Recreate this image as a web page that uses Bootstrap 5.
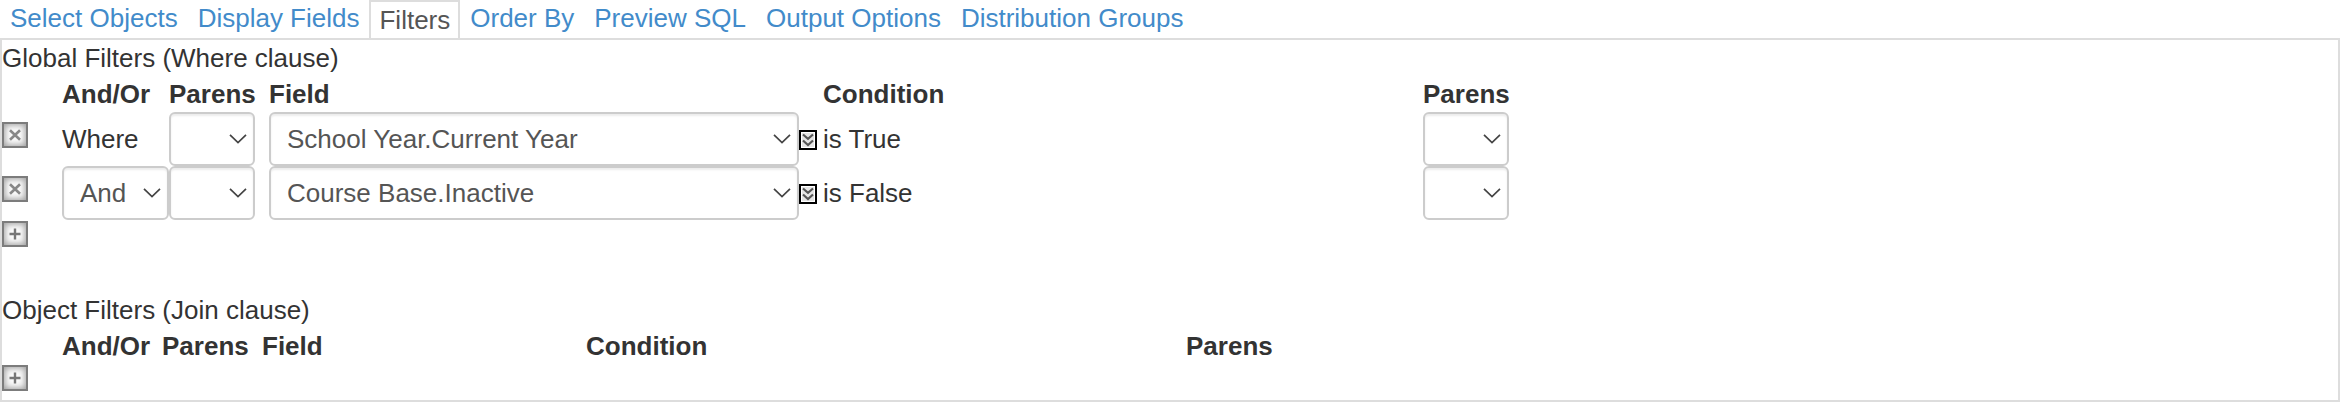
<!DOCTYPE html>
<html lang="en">
<head>
<meta charset="utf-8">
<title>Filters</title>
<link href="https://cdn.jsdelivr.net/npm/bootstrap@5.3.0/dist/css/bootstrap.min.css" rel="stylesheet">
<style>
html{overflow:hidden}
body{font:26px/36px "Liberation Sans",Arial,sans-serif;color:#333;background:#fff;height:402px;overflow:hidden}
.tabs-bar{height:38px}
.tabs-bar .nav-link{padding:0 10px;color:#428bca;line-height:36px;white-space:nowrap}
.tabs-bar .nav-link.active{color:#555;border:2px solid #ddd;border-bottom:0;padding:0 8px;height:38px}
.filter-panel{border:2px solid #ddd;height:364px}
.filter-grid{display:grid;grid-template-columns:60px 107px 100px 554px 600px 86px;white-space:nowrap}
.join-grid{grid-template-columns:60px 100px 100px 324px 600px 86px}
.filter-line{height:54px;line-height:54px}
.add-line{height:36px;padding-top:1px}
.form-select.pick{height:54px;border:2px solid #ccc;border-radius:6px;padding:0 16px;font-size:26px;line-height:50px;color:#555;box-shadow:inset 0 2px 2px rgba(0,0,0,.075);background:#fff url("data:image/svg+xml,%3Csvg xmlns='http://www.w3.org/2000/svg' viewBox='0 0 18 12'%3E%3Cpath d='M1 1.8L9 9.6L17 1.8' fill='none' stroke='%23444' stroke-width='1.7'/%3E%3C/svg%3E") no-repeat right 6px top 19px/18px 12px}
.w-and{width:107px}.w-paren{width:86px}.w-field{width:530px}
.tool{width:26px;height:26px;border:2px solid #7c7c7c;box-shadow:inset 0 0 6px 1px #999;background:#fbfbfb;padding:0}
.filter-line .tool{margin-top:10px}
.tool svg,.expand svg{display:block}
.expand{width:18px;height:20px;margin:1px 6px 0 0}
</style>
</head>
<body>
<nav class="nav tabs-bar flex-nowrap">
<a class="nav-link" href="#">Select Objects</a>
<a class="nav-link" href="#">Display Fields</a>
<a class="nav-link active" href="#">Filters</a>
<a class="nav-link" href="#">Order By</a>
<a class="nav-link" href="#">Preview SQL</a>
<a class="nav-link" href="#">Output Options</a>
<a class="nav-link" href="#">Distribution Groups</a>
</nav>
<svg class="d-none">
<symbol id="remove" viewBox="0 0 22 22"><path d="M6 6.2L16 15.8M16 6.2L6 15.8" stroke="#888" stroke-width="2.6"/></symbol>
<symbol id="add" viewBox="0 0 22 22"><path d="M11 5.5V16.500M5.500 11H16.500" stroke="#777" stroke-width="2.400"/></symbol>
<symbol id="expand" viewBox="0 0 18 20"><path fill="#fff" stroke="#000" stroke-width="2" d="M1 1H17V19H1Z"/><path fill="#e4e4e4" d="M3 3H15V17H3Z"/><path d="M4 4.500L9 8.800L14 4.500M4 10.500L9 15L14 10.500" fill="none" stroke="#555" stroke-width="2.200"/></symbol>
</svg>
<main class="filter-panel">
<section>
<div>Global Filters (Where clause)</div>
<div class="filter-grid fw-bold"><span></span><span>And/Or</span><span>Parens</span><span>Field</span><span>Condition</span><span>Parens</span></div>
<div class="filter-grid filter-line">
<div class="tool"><svg width="22" height="22"><use href="#remove"/></svg></div>
<span>Where</span>
<select class="form-select pick w-paren"><option></option></select>
<div class="d-flex align-items-center"><select class="form-select pick w-field"><option>School Year.Current Year</option></select><span class="expand"><svg width="18" height="20"><use href="#expand"/></svg></span></div>
<span>is True</span>
<select class="form-select pick w-paren"><option></option></select>
</div>
<div class="filter-grid filter-line">
<div class="tool"><svg width="22" height="22"><use href="#remove"/></svg></div>
<select class="form-select pick w-and"><option>And</option></select>
<select class="form-select pick w-paren"><option></option></select>
<div class="d-flex align-items-center"><select class="form-select pick w-field"><option>Course Base.Inactive</option></select><span class="expand"><svg width="18" height="20"><use href="#expand"/></svg></span></div>
<span>is False</span>
<select class="form-select pick w-paren"><option></option></select>
</div>
<div class="add-line"><div class="tool"><svg width="22" height="22"><use href="#add"/></svg></div></div>
</section>
<section class="join-section">
<div style="height:36px"></div>
<div>Object Filters (Join clause)</div>
<div class="filter-grid join-grid fw-bold"><span></span><span>And/Or</span><span>Parens</span><span>Field</span><span>Condition</span><span>Parens</span></div>
<div class="add-line"><div class="tool"><svg width="22" height="22"><use href="#add"/></svg></div></div>
</section>
</main>
<script src="https://cdn.jsdelivr.net/npm/bootstrap@5.3.0/dist/js/bootstrap.bundle.min.js"></script>
</body>
</html>
